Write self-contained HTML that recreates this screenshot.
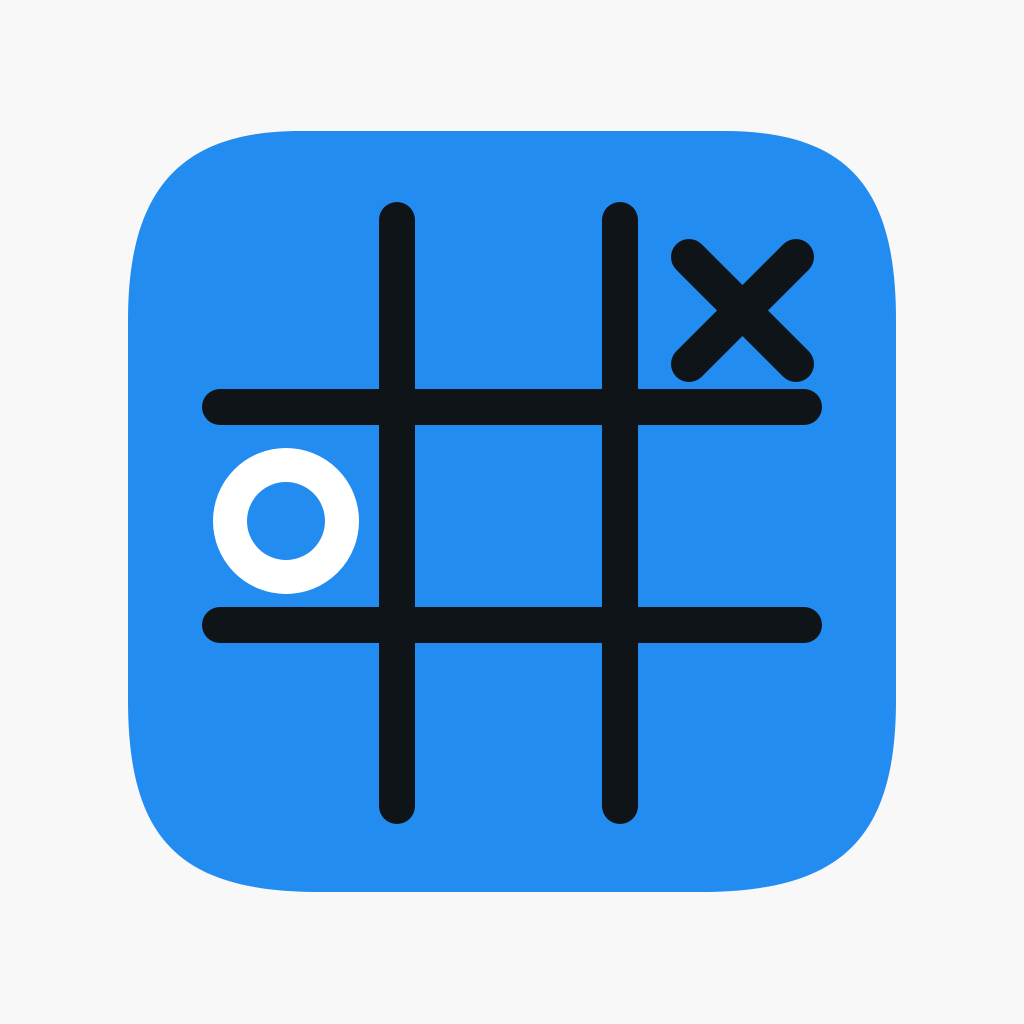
<!DOCTYPE html>
<html><head><style>
html,body{margin:0;padding:0;background:#f8f8f8;width:1024px;height:1024px;overflow:hidden}
</style></head><body>
<svg width="1024" height="1024" viewBox="0 0 1024 1024" style="display:block">
<rect width="1024" height="1024" fill="#f8f8f8"/>
<path d="M300 131 H724 C850 131 896 190 896 320 V700 C896 840 840 892 700 892 H320 C180 892 128 840 128 700 V320 C128 190 180 131 300 131 Z" fill="#238cf0"/>
<g stroke="#0e1418" stroke-width="36" stroke-linecap="round" fill="none">
<line x1="397" y1="220" x2="397" y2="806"/>
<line x1="620" y1="220" x2="620" y2="806"/>
<line x1="220" y1="407" x2="804" y2="407"/>
<line x1="220" y1="625" x2="804" y2="625"/>
<line x1="689" y1="257" x2="796" y2="364"/>
<line x1="796" y1="257" x2="689" y2="364"/>
</g>
<circle cx="286" cy="521" r="56" fill="none" stroke="#ffffff" stroke-width="34"/>
</svg>
</body></html>
